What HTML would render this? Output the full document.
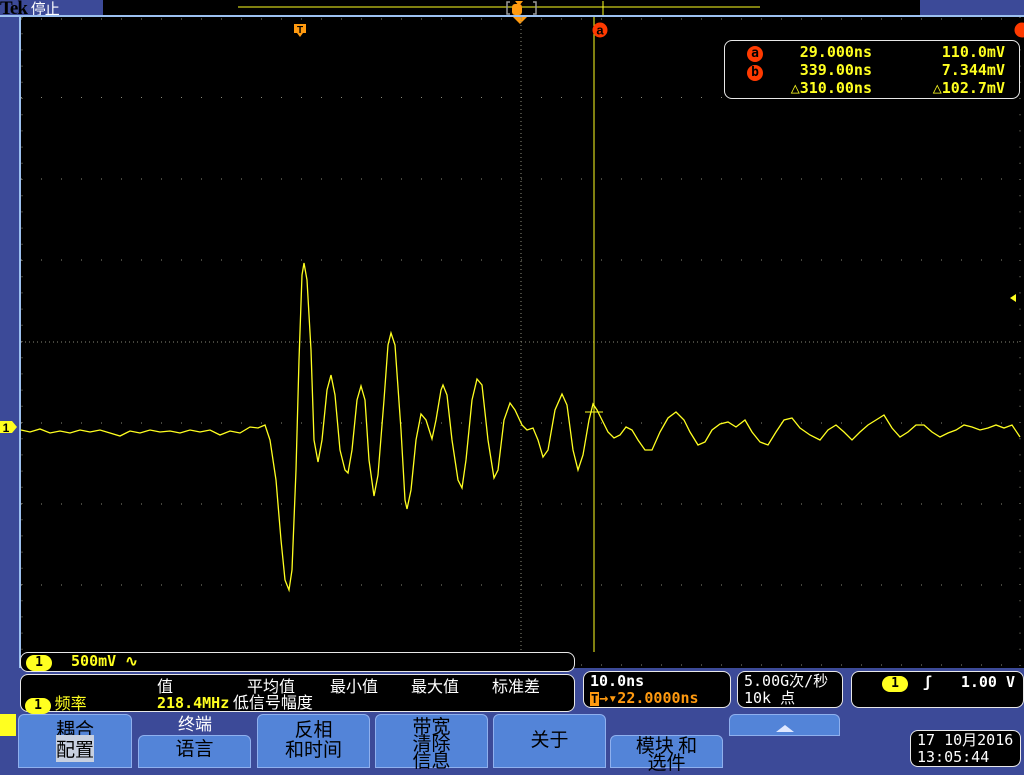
<!DOCTYPE html>
<html><head><meta charset="utf-8"><style>
*{margin:0;padding:0;box-sizing:border-box}
body{width:1024px;height:768px;background:#3c4a98;position:relative;overflow:hidden;font-family:"Liberation Sans","Noto Sans CJK SC",sans-serif}
.abs{position:absolute}
.box{position:absolute;background:#000;border:1.5px solid #e8e8e8;border-radius:8px;color:#fff;font-family:"DejaVu Sans Mono","Noto Sans CJK SC",monospace;font-size:15px;font-weight:bold}
.y{color:#ffff20}.o{color:#ff9a10}
.btn{position:absolute;background:#5384d8;border:1px solid #8fb0ee;border-radius:6px 6px 0 0;color:#000;font-size:19px;text-align:center;line-height:20px;font-family:"Noto Sans CJK SC",sans-serif}
.c1{display:inline-block;background:#ffff20;color:#000;border-radius:9px;width:26px;height:16px;line-height:16px;text-align:center;font-size:13px}
.cn{font-family:"Noto Sans CJK SC",sans-serif;font-size:16px;font-weight:normal;position:absolute;top:0;line-height:20px}
</style></head><body>
<div class="abs" style="left:0;top:-2px;font-size:19px;color:#000;font-weight:bold;font-family:'Liberation Serif',serif;letter-spacing:-1px">Tek <span style="color:#fff;font-weight:normal;font-family:'Noto Sans CJK SC',sans-serif;font-size:15px">停止</span></div>
<div class="abs" style="left:103px;top:0;width:817px;height:15px;background:#000"></div>
<div class="abs" style="left:0;top:15px;width:1024px;height:2px;background:#9cc0f0"></div>
<div class="abs" style="left:19px;top:16px;width:2px;height:652px;background:#9cc0f0"></div>
<div class="abs" style="left:21px;top:17px;width:1003px;height:651px;background:#000"></div>
<svg class="abs" style="left:0;top:0" width="1024" height="768">
<line x1="238" y1="7" x2="760" y2="7" stroke="#ffff20" stroke-width="1"/>
<line x1="603" y1="1" x2="603" y2="15" stroke="#ffff20"/>
<path d="M510 2h-3v12h3M533 2h3v12h-3" stroke="#999" fill="none" stroke-width="1.5"/>
<rect x="512" y="4" width="10" height="11" rx="3" fill="#ff9a10"/>
<path d="M515 1h8l-4 5z" fill="#ff9a10"/>
<path d="M513 17h14l-7 7z" fill="#ff9a10"/>
<g stroke="#8a8a7a" stroke-width="1" stroke-dasharray="1,3">
<line x1="21" y1="342" x2="1021" y2="342"/>
<line x1="521" y1="17" x2="521" y2="667"/>
</g>
<g stroke="#8a8a7a" stroke-width="1" stroke-dasharray="1,19">
<line x1="21" y1="19" x2="1021" y2="19"/>
<line x1="21" y1="97.5" x2="1021" y2="97.5"/>
<line x1="21" y1="179" x2="1021" y2="179"/>
<line x1="21" y1="260" x2="1021" y2="260"/>
<line x1="21" y1="423" x2="1021" y2="423"/>
<line x1="21" y1="504" x2="1021" y2="504"/>
<line x1="21" y1="585" x2="1021" y2="585"/>
<line x1="21" y1="665" x2="1021" y2="665"/>
<line x1="22" y1="17" x2="22" y2="667" stroke-dasharray="1,15.2"/>
<line x1="1020" y1="17" x2="1020" y2="667" stroke-dasharray="1,15.2"/>
</g>
<line x1="594" y1="17" x2="594" y2="652" stroke="#ffff20" stroke-width="1"/>
<line x1="585" y1="412" x2="603" y2="412" stroke="#ffff20" stroke-width="1"/>
<polyline fill="none" stroke="#ffff20" stroke-width="1.3" points="21,430 30,432 40,429 50,433 60,431 70,433 80,430 90,432 100,430 110,433 120,436 130,431 140,433 150,430 160,432 170,431 180,433 190,430 200,432 210,430 220,435 230,431 240,433 250,427 258,428 265,425 270,440 276,480 281,540 285,580 289,590 292,570 296,470 299,360 302,275 304,263 307,280 311,350 314,440 318,462 322,440 327,390 331,375 335,395 340,450 345,470 348,473 352,450 357,400 361,386 365,400 369,460 374,496 378,475 384,400 388,345 391,333 395,345 401,430 405,500 407,509 411,490 416,440 421,414 426,420 432,439 436,420 441,390 443,385 447,395 452,440 458,480 462,488 466,460 472,400 477,379 482,385 488,440 494,478 498,470 504,420 510,403 515,410 522,425 527,430 533,428 538,440 543,457 548,450 555,410 562,394 567,405 573,450 578,470 583,455 589,420 593,404 597,410 602,420 608,432 614,438 620,435 626,427 632,430 638,440 645,450 652,450 660,432 668,418 676,412 684,420 690,432 698,445 705,442 712,430 720,424 728,422 736,427 745,420 752,432 760,442 768,445 776,432 784,420 792,418 800,428 810,435 820,440 828,430 836,425 844,432 852,440 860,432 868,425 876,420 884,415 892,428 900,437 908,432 916,425 924,425 932,432 940,437 948,433 956,430 964,425 972,427 980,430 988,428 996,425 1004,428 1012,425 1020,437"/>
<path d="M294 24h12v9h-3l-3 4-3-4h-3z" fill="#ff9a10"/>
<text x="300" y="33" font-size="10" font-weight="bold" text-anchor="middle" fill="#000" font-family="Liberation Sans">T</text>
<circle cx="600" cy="30" r="7.5" fill="#ff3a00"/>
<text x="600" y="34.5" font-size="13" font-weight="bold" text-anchor="middle" fill="#000" font-family="Liberation Sans">a</text>
<circle cx="1022" cy="30" r="7.5" fill="#ff3a00"/>
<path d="M0 421h12l5 6-5 6h-12z" fill="#ffff20"/>
<text x="6" y="432" font-size="12" font-weight="bold" text-anchor="middle" fill="#000" font-family="Liberation Sans">1</text>
<path d="M1010 298l6-4v8z" fill="#ffff20"/>
<path d="M0 714h16v22h-16z" fill="#ffff20"/>
</svg>
<div class="box" style="left:724px;top:40px;width:296px;height:59px;line-height:18px;padding-top:2px">
<div style="position:absolute;left:22px;top:2px;line-height:18px"><span style="display:inline-block;width:16px;height:16px;border-radius:8px;background:#ff3a00;color:#000;text-align:center;line-height:15px;font-size:13px">a</span><br><span style="display:inline-block;width:16px;height:16px;border-radius:8px;background:#ff3a00;color:#000;text-align:center;line-height:15px;font-size:13px">b</span></div>
<div class="y" style="position:absolute;left:57px;top:2px;text-align:right;width:90px">29.000ns<br>339.00ns<br>△310.00ns</div>
<div class="y" style="position:absolute;right:14px;top:2px;text-align:right">110.0mV<br>7.344mV<br>△102.7mV</div>
</div>
<div class="box" style="left:20px;top:652px;width:555px;height:20px;line-height:17px;padding-left:5px"><span class="c1">1</span> <span class="y" style="margin-left:10px">500mV ∿</span></div>
<div class="box" style="left:20px;top:674px;width:555px;height:38px;font-weight:normal">
<span class="cn" style="left:136px">值</span>
<span class="cn" style="left:226px">平均值</span>
<span class="cn" style="left:309px">最小值</span>
<span class="cn" style="left:390px">最大值</span>
<span class="cn" style="left:471px">标准差</span>
<div style="position:absolute;left:4px;top:18px;line-height:18px"><span class="c1" style="font-weight:bold">1</span><span class="y" style="font-size:16px;font-family:'Noto Sans CJK SC',sans-serif"> 频率</span></div>
<div style="position:absolute;left:136px;top:17px;font-size:16px;line-height:19px;font-family:'Noto Sans CJK SC',sans-serif"><span class="y" style="font-weight:bold;font-family:'DejaVu Sans Mono',monospace;font-size:15px">218.4MHz</span> 低信号幅度</div>
</div>
<div class="box" style="left:583px;top:671px;width:148px;height:37px;line-height:17px;padding:1px 0 0 6px">10.0ns<br><span class="o"><span style="background:#ff9a10;color:#000;font-size:12px;padding:0 1px">T</span>→▾22.0000ns</span></div>
<div class="box" style="left:737px;top:671px;width:106px;height:37px;line-height:17px;padding:1px 0 0 6px;font-weight:normal;font-size:15px">5.00G次/秒<br>10k 点</div>
<div class="box" style="left:851px;top:671px;width:173px;height:37px;padding:2px 0 0 30px;line-height:17px"><span class="c1">1</span> <span style="margin-left:6px">ʃ</span><span style="position:absolute;right:8px">1.00 V</span></div>
<div class="btn" style="left:18px;top:714px;width:114px;height:54px;padding-top:4px">耦合<br><span style="background:#c8d0e0">配置</span></div>
<div class="btn" style="left:138px;top:735px;width:113px;height:33px;padding-top:2px">语言</div>
<div class="abs" style="left:178px;top:710px;color:#fff;font-size:17px;font-family:'Noto Sans CJK SC',sans-serif">终端</div>
<div class="btn" style="left:257px;top:714px;width:113px;height:54px;padding-top:4px">反相<br>和时间</div>
<div class="btn" style="left:375px;top:714px;width:113px;height:54px;padding-top:2px;line-height:17px">带宽<br>清除<br>信息</div>
<div class="btn" style="left:493px;top:714px;width:113px;height:54px;padding-top:14px">关于</div>
<div class="btn" style="left:610px;top:735px;width:113px;height:33px;padding-top:0;line-height:17px">模块 和<br>选件</div>
<div class="btn" style="left:729px;top:714px;width:111px;height:22px"><div style="margin:10px auto 0;width:0;height:0;border-left:9px solid transparent;border-right:9px solid transparent;border-bottom:7px solid #e0e8ff"></div></div>
<div class="box" style="left:910px;top:730px;width:111px;height:37px;line-height:17px;padding:1px 0 0 6px;font-weight:normal">17 10月2016<br>13:05:44</div>
</body></html>
